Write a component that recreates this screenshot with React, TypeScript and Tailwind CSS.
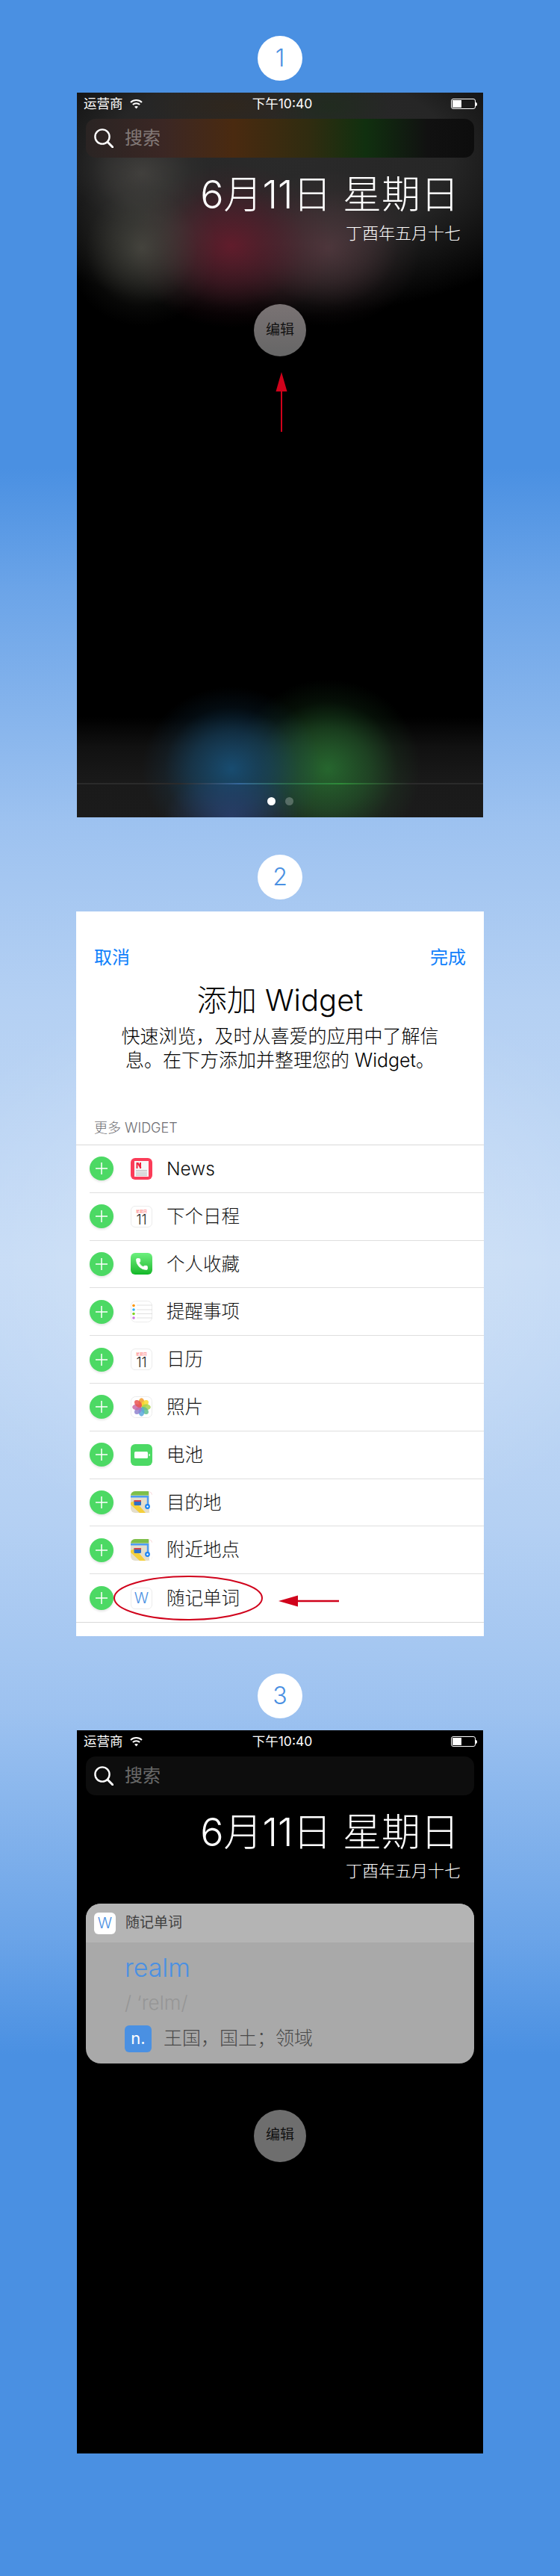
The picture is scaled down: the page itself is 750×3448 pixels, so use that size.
import React from "react";
import { Phone } from "lucide-react";

interface WidgetRow {
  id: number;
  title: string;
  icon: React.ReactNode;
}

const Badge = ({ n }: { n: number }) => (
  <div className="w-[60px] h-[60px] rounded-full bg-white flex items-center justify-center text-[32px] leading-none text-[#4a90e2] font-light">
    {n}
  </div>
);

const Wifi = () => (
  <svg width="17" height="14" viewBox="0 0 17 14" fill="none" stroke="white" strokeWidth="2">
    <path d="M1 5 C5.2 1 11.8 1 16 5" />
    <path d="M3.8 8 C6.5 5.5 10.5 5.5 13.2 8" />
    <path d="M8.5 13.5 L6 10.8 C7.5 9.6 9.5 9.6 11 10.8 Z" fill="white" stroke="none" />
  </svg>
);

const StatusBar = () => (
  <div className="h-[30px] grid grid-cols-3 items-center pl-[9px] pr-[8px] text-white text-[17.5px] leading-none">
    <div className="flex items-center gap-[9px]">
      <span>运营商</span>
      <Wifi />
    </div>
    <div className="text-center pl-[5px] whitespace-nowrap">下午10:40</div>
    <div className="flex justify-end items-center">
      <div className="w-[33px] h-[14px] rounded-[3px] border border-white p-[1px]">
        <div className="w-[12px] h-full bg-white" />
      </div>
      <div className="w-[2px] h-[5px] bg-white rounded-r-sm" />
    </div>
  </div>
);

const SearchBar = ({ className }: { className: string }) => (
  <div className={`mt-[5px] mx-3 h-[52px] rounded-[13px] flex items-center pl-[11px] gap-[15px] ${className}`}>
    <svg width="26" height="26" viewBox="0 0 26 26" fill="none" stroke="white" strokeWidth="2.4">
      <circle cx="11" cy="11" r="9.6" />
      <path d="M18 18 L25 25" strokeLinecap="round" strokeWidth="3" />
    </svg>
    <span className="text-[24px] leading-none text-white/40">搜索</span>
  </div>
);

const DateBlock = () => (
  <div className="text-white text-right">
    <div className="mt-[24px] pr-[32px] text-[52px] leading-[52px] font-light whitespace-nowrap">6月11日 星期日</div>
    <div className="mt-[13px] pr-[30px] text-[22px] leading-[24px] font-light">丁酉年五月十七</div>
  </div>
);

const EditButton = ({ className }: { className: string }) => (
  <div className={`w-[70px] h-[70px] rounded-full flex items-center justify-center text-[19px] text-[#111] ${className}`}>
    编辑
  </div>
);

const CalendarIcon = () => (
  <div className="w-[29px] h-[29px] rounded-[6px] bg-white border border-[#ececec] flex flex-col items-center pt-[3px]">
    <span className="text-[5px] leading-[6px] text-[#f66]">星期日</span>
    <span className="text-[18px] leading-[18px] font-light text-[#222]">11</span>
  </div>
);

const NewsIcon = () => (
  <svg width="29" height="29" viewBox="0 0 29 29">
    <rect width="29" height="29" rx="6" fill="#fb3c58" />
    <rect x="5" y="4" width="19" height="21" fill="#f7f7f7" />
    <path d="M8 6 h2.5 l4 7 h-2.5z M7.5 6 h2v8h-2z M12 6 h2v8h-2z" fill="#f0243f" />
    <path d="M7 16.5h15M7 18.8h15M7 21.1h15M7 23.2h15" stroke="#b9b9b9" strokeWidth="1" />
  </svg>
);

const RemindersIcon = () => (
  <svg width="29" height="29" viewBox="0 0 29 29">
    <rect x="0.5" y="0.5" width="28" height="28" rx="6" fill="#fff" stroke="#ececec" />
    <path d="M8 6h21M8 12h21M8 17.5h21M8 23h21" stroke="#d8d8d8" strokeWidth="0.8" />
    <circle cx="4" cy="6.5" r="1.8" fill="#ff9500" />
    <circle cx="4" cy="12" r="1.8" fill="#2fb0f6" />
    <circle cx="4" cy="17.5" r="1.8" fill="#7ed321" />
    <circle cx="4" cy="23" r="1.8" fill="#cc73e1" />
  </svg>
);

const PhotosIcon = () => {
  const petals = ["#f39c2c", "#f8d92e", "#a6d24a", "#5fbf8f", "#5aa8dc", "#8f82cf", "#c96aa6", "#ea5450"];
  return (
    <svg width="29" height="29" viewBox="0 0 29 29">
      <rect x="0.5" y="0.5" width="28" height="28" rx="6" fill="#fff" stroke="#ececec" />
      {petals.map((c, i) => (
        <ellipse key={c} cx="14.5" cy="8.2" rx="3.9" ry="6" fill={c} opacity="0.85" transform={`rotate(${i * 45} 14.5 14.5)`} />
      ))}
    </svg>
  );
};

const BatteryIcon = () => (
  <svg width="29" height="29" viewBox="0 0 29 29">
    <rect width="29" height="29" rx="6" fill="#4cd964" />
    <rect x="5" y="10" width="18" height="9" rx="1.5" fill="#fff" />
    <rect x="24.5" y="13" width="1.2" height="3" fill="#fff" />
  </svg>
);

const MapIcon = () => (
  <svg width="29" height="29" viewBox="0 0 29 29">
    <defs>
      <clipPath id="map-clip">
        <rect width="29" height="29" rx="6" />
      </clipPath>
    </defs>
    <g clipPath="url(#map-clip)">
      <rect width="29" height="29" fill="#e4decb" />
      <rect width="24" height="5.5" fill="#7dbf4a" />
      <rect x="25" width="4" height="29" fill="#fff" />
      <path d="M25 0h4v5z" fill="#f8c9d0" />
      <path d="M0 15 L6 13 L20 29 L12 29 L0 18Z" fill="#f5cf3a" />
      <path d="M0 7.3h23v12" fill="none" stroke="#4d9df5" strokeWidth="2.4" />
      <rect x="4.5" y="12" width="9.5" height="7" rx="1.5" fill="#2f6fc6" />
      <rect x="4.5" y="12" width="9.5" height="2" fill="#d0454c" />
      <circle cx="22.5" cy="20.5" r="3.4" fill="#1a84f4" />
      <circle cx="22.5" cy="20.5" r="1.2" fill="#fff" />
    </g>
  </svg>
);

const WordIcon = () => (
  <div className="w-[29px] h-[29px] rounded-[6px] bg-white border border-[#ececec] flex items-center justify-center text-[20px] leading-none font-light text-[#4a90e2]">
    W
  </div>
);

const rows: WidgetRow[] = [
  { id: 1, title: "News", icon: <NewsIcon /> },
  { id: 2, title: "下个日程", icon: <CalendarIcon /> },
  {
    id: 3,
    title: "个人收藏",
    icon: (
      <div className="w-[29px] h-[29px] rounded-[6px] bg-linear-to-b from-[#6cf07e] to-[#0bb826] flex items-center justify-center">
        <Phone size={18} color="white" fill="white" strokeWidth={1} />
      </div>
    ),
  },
  { id: 4, title: "提醒事项", icon: <RemindersIcon /> },
  { id: 5, title: "日历", icon: <CalendarIcon /> },
  { id: 6, title: "照片", icon: <PhotosIcon /> },
  { id: 7, title: "电池", icon: <BatteryIcon /> },
  { id: 8, title: "目的地", icon: <MapIcon /> },
  { id: 9, title: "附近地点", icon: <MapIcon /> },
  { id: 10, title: "随记单词", icon: <WordIcon /> },
];

const PlusButton = () => (
  <div className="w-[32px] h-[32px] rounded-full bg-[#4cd964] shadow-[0_2px_3px_rgba(0,0,0,0.1)] flex items-center justify-center shrink-0">
    <svg width="16" height="16" viewBox="0 0 16 16" stroke="white" strokeWidth="1.5">
      <path d="M8 0v16M0 8h16" />
    </svg>
  </div>
);

const AddWidgetPanel = () => (
  <div className="mt-4 w-[546px] h-[970px] bg-white text-black">
    <div className="pt-[50px] px-6 flex justify-between text-[24px] leading-[24px] text-[#1080fb]">
      <span>取消</span>
      <span>完成</span>
    </div>
    <div className="mt-[21px] text-center text-[40px] leading-[48px] font-light">添加 Widget</div>
    <div className="mt-[8px] text-center text-[25px] leading-[32px] font-light">
      快速浏览，及时从喜爱的应用中了解信
      <br />
      息。在下方添加并整理您的 Widget。
    </div>
    <div className="mt-[65px] mb-[12px] pl-6 text-[18px] leading-[20px] text-[#6d6d72] font-light">更多 WIDGET</div>
    <div className="border-t border-b border-[#d9d9d9]">
      {rows.map((row, i) => (
        <div key={row.id} className="relative pl-[18px]">
          <div
            className={`h-[63.8px] flex items-center ${i < rows.length - 1 ? "border-b border-[#dfdfdf]" : ""}`}
          >
            <PlusButton />
            <div className="ml-[23px] w-[29px] h-[29px] shrink-0">{row.icon}</div>
            <div className="ml-[19px] text-[24.5px] font-light text-[#111]">{row.title}</div>
          </div>
          {i === rows.length - 1 && (
            <>
              {/* red callout over the last row */}
              <svg className="absolute left-[50px] top-[2px]" width="200" height="60" viewBox="0 0 200 60" fill="none">
                <ellipse cx="100" cy="30" rx="99" ry="29" stroke="#d0021b" strokeWidth="2" />
              </svg>
              <svg className="absolute left-[271px] top-[28px]" width="82" height="16" viewBox="0 0 82 16">
                <path d="M0 8 L26 0.5 V6.8 H81 V9.2 H26 V15.5 Z" fill="#d0021b" />
              </svg>
            </>
          )}
        </div>
      ))}
    </div>
  </div>
);

const FirstPhone = () => (
  <div className="mt-4 w-[544px] h-[970px] flex flex-col text-white bg-black bg-[radial-gradient(ellipse_90px_70px_at_87px_108px,rgba(76,74,70,0.7),rgba(76,74,70,0.35)_45%,rgba(76,74,70,0.1)_75%,transparent),radial-gradient(ellipse_100px_105px_at_87px_208px,rgba(78,78,70,0.8),rgba(78,78,70,0.4)_45%,rgba(78,78,70,0.1)_75%,transparent),radial-gradient(ellipse_135px_110px_at_207px_205px,rgba(100,28,44,0.95),rgba(90,28,44,0.55)_45%,rgba(90,28,44,0.15)_75%,transparent),radial-gradient(ellipse_125px_105px_at_336px_208px,rgba(84,58,64,0.85),rgba(84,58,64,0.45)_45%,rgba(84,58,64,0.12)_75%,transparent),radial-gradient(ellipse_110px_40px_at_205px_18px,rgba(60,36,10,0.35),transparent),radial-gradient(ellipse_80px_40px_at_340px_18px,rgba(20,50,15,0.35),transparent),radial-gradient(ellipse_120px_110px_at_207px_905px,rgba(24,76,112,1),rgba(24,76,112,0.55)_45%,rgba(24,76,112,0.15)_75%,transparent),radial-gradient(ellipse_125px_120px_at_336px_905px,rgba(38,102,46,1),rgba(38,102,46,0.55)_45%,rgba(38,102,46,0.15)_75%,transparent),radial-gradient(ellipse_420px_215px_at_272px_85px,#2a2a2a,#262626_55%,transparent),linear-gradient(to_top,#1b1b1b,#1a1a1a_44px,#111_94px,transparent_134px)]">
    <StatusBar />
    <SearchBar className="bg-[linear-gradient(90deg,#2a2423,#3b2724_20%,#4a2a10_38%,#2f2c10_58%,#10300f_72%,#111_88%,#0d0d0d)]" />
    <DateBlock />
    <div className="mt-[83px] flex flex-col items-center">
      <EditButton className="bg-linear-to-b from-[#7a7374] to-[#666]" />
      <svg className="mt-[21px] ml-[4px]" width="16" height="80" viewBox="0 0 16 80">
        <path d="M8 0 L15.5 26 H9 V80 H7 V26 H0.5 Z" fill="#d0021b" />
      </svg>
    </div>
    <div className="mt-auto h-[2px] bg-[linear-gradient(90deg,#2a2a2a,#2a2a2a_25%,#35679a_40%,#2b6a4a_52%,#2e8a38_65%,#2a2a2a_82%)]" />
    <div className="h-[44px] flex items-center justify-center gap-[13px] bg-[radial-gradient(ellipse_90px_60px_at_207px_44px,rgba(50,70,130,0.6),transparent)]">
      <div className="w-[11px] h-[11px] rounded-full bg-white" />
      <div className="w-[11px] h-[11px] rounded-full bg-white/25" />
    </div>
  </div>
);

const ThirdPhone = () => (
  <div className="mt-4 w-[544px] h-[968px] flex flex-col text-white bg-black">
    <StatusBar />
    <SearchBar className="bg-[#0d0d0d]" />
    <DateBlock />
    <div className="mt-[32px] mx-3 rounded-[20px] overflow-hidden bg-[#a9a9a9]">
      <div className="h-[52px] bg-[#b4b4b4] flex items-center pl-[11px] gap-[13px]">
        <div className="w-[29px] h-[29px] rounded-[6px] bg-white flex items-center justify-center text-[20px] leading-none text-[#4a90e2] font-light">
          W
        </div>
        <span className="text-[19px] text-[#3f3f3f]">随记单词</span>
      </div>
      <div className="pl-[52px] pt-[14px] pb-[14px]">
        <div className="text-[34px] leading-[40px] text-[#4a90e2] font-light">realm</div>
        <div className="mt-[12px] text-[26px] leading-[30px] text-[#969696] font-light">/ ‘relm/</div>
        <div className="mt-[14px] flex items-center gap-[16px]">
          <div className="w-[36px] h-[36px] rounded-[6px] bg-[#4a90e2] text-white text-[22px] flex items-center justify-center">
            n.
          </div>
          <span className="text-[25px] text-[#4a4a4a] font-light">王国，国土；领域</span>
        </div>
      </div>
    </div>
    <div className="mt-[62px] flex justify-center">
      <EditButton className="bg-[#6e6e6e]" />
    </div>
  </div>
);

export default function App() {
  return (
    <div className="w-[750px] h-[3448px] pt-[48px] flex flex-col items-center font-['Inter','Noto_Sans_CJK_SC',sans-serif] bg-[radial-gradient(ellipse_520px_380px_at_375px_1690px,rgba(255,255,255,0.3),transparent),linear-gradient(180deg,#4a90e2_627px,#6ba4e8_787px,#9dc2f0_1100px,#b4d0f3_1340px,#c4daf5_1690px,#b4d0f3_2040px,#9dc2f0_2290px,#6ba4e8_2593px,#4a90e2_2750px)]">
      <Badge n={1} />
      <FirstPhone />
      <div className="mt-[50px]">
        <Badge n={2} />
      </div>
      <AddWidgetPanel />
      <div className="mt-[50px]">
        <Badge n={3} />
      </div>
      <ThirdPhone />
    </div>
  );
}
